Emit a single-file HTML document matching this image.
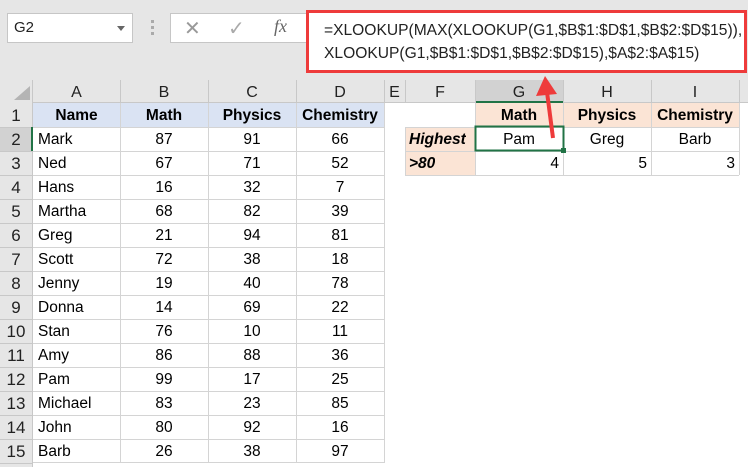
<!DOCTYPE html>
<html><head><style>
*{margin:0;padding:0;box-sizing:border-box}
body{width:748px;height:467px;overflow:hidden;background:#fff;font-family:"Liberation Sans",sans-serif;position:relative;color:#000}
.a{position:absolute}
.c{position:absolute;font-size:15.5px;line-height:25px;height:24px;white-space:nowrap;overflow:hidden}
</style></head><body>
<div class="a" style="left:0;top:0;width:748px;height:80px;background:#e6e6e6"></div>
<div class="a" style="left:7px;top:13px;width:126px;height:30px;background:#fff;border:1px solid #c6c6c6"></div>
<div class="a" style="left:14px;top:19px;font-size:15px;color:#222">G2</div>
<div class="a" style="left:117px;top:26px;border-left:4px solid transparent;border-right:4px solid transparent;border-top:5px solid #666"></div>
<div class="a" style="left:151px;top:20px;width:3px;height:3px;background:#aaa;box-shadow:0 6px #aaa,0 12px #aaa"></div>
<div class="a" style="left:170px;top:13px;width:140px;height:30px;background:#fff;border:1px solid #c6c6c6"></div>
<div class="a" style="left:184px;top:16px;font-size:20px;color:#999">✕</div>
<div class="a" style="left:228px;top:16px;font-size:20px;color:#aaa">✓</div>
<div class="a" style="left:274px;top:16px;font-size:18px;font-style:italic;font-family:'Liberation Serif',serif;color:#666">fx</div>
<div class="a" style="left:306px;top:10px;width:441px;height:63px;background:#fff;border:3px solid #ee3b3b"></div>
<div class="a" style="left:324px;top:19px;font-size:15.6px;line-height:23px;color:#222;white-space:nowrap">=XLOOKUP(MAX(XLOOKUP(G1,$B$1:$D$1,$B$2:$D$15)),<br>XLOOKUP(G1,$B$1:$D$1,$B$2:$D$15),$A$2:$A$15)</div>
<div class="a" style="left:0;top:80px;width:748px;height:23px;background:#e6e6e6;border-bottom:1px solid #c8c8c8"></div>
<div class="a" style="left:0;top:80px;width:33px;height:387px;background:#e6e6e6;border-right:1px solid #c8c8c8"></div>
<div class="a" style="left:14px;top:86px;border-left:16px solid transparent;border-bottom:14px solid #b4b4b4"></div>
<div class="a" style="left:475px;top:80px;width:88px;height:23px;background:#d2d2d2;border-bottom:2px solid #217346"></div>
<div class="a" style="left:0;top:127px;width:33px;height:24px;background:#d2d2d2"></div>
<svg class="a" style="left:0;top:0" width="748" height="467">
<rect x="33" y="103" width="351" height="24" fill="#dae3f3"/>
<rect x="475" y="103" width="264" height="24" fill="#fbe4d5"/>
<rect x="405" y="127" width="70" height="48" fill="#fbe4d5"/>
<g stroke="#d4d4d4">
<line x1="33" y1="127.5" x2="384" y2="127.5"/><line x1="33" y1="151.5" x2="384" y2="151.5"/><line x1="33" y1="175.5" x2="384" y2="175.5"/><line x1="33" y1="199.5" x2="384" y2="199.5"/><line x1="33" y1="223.5" x2="384" y2="223.5"/><line x1="33" y1="247.5" x2="384" y2="247.5"/><line x1="33" y1="271.5" x2="384" y2="271.5"/><line x1="33" y1="295.5" x2="384" y2="295.5"/><line x1="33" y1="319.5" x2="384" y2="319.5"/><line x1="33" y1="343.5" x2="384" y2="343.5"/><line x1="33" y1="367.5" x2="384" y2="367.5"/><line x1="33" y1="391.5" x2="384" y2="391.5"/><line x1="33" y1="415.5" x2="384" y2="415.5"/><line x1="33" y1="439.5" x2="384" y2="439.5"/><line x1="33" y1="462.5" x2="384" y2="462.5"/>
<line x1="405" y1="127.5" x2="739" y2="127.5"/><line x1="405" y1="151.5" x2="739" y2="151.5"/><line x1="405" y1="175.5" x2="739" y2="175.5"/>
<line x1="120.5" y1="103" x2="120.5" y2="463"/><line x1="208.5" y1="103" x2="208.5" y2="463"/><line x1="296.5" y1="103" x2="296.5" y2="463"/><line x1="384.5" y1="103" x2="384.5" y2="463"/>
<line x1="405.5" y1="127" x2="405.5" y2="175"/><line x1="475.5" y1="103" x2="475.5" y2="175"/><line x1="563.5" y1="103" x2="563.5" y2="175"/><line x1="651.5" y1="103" x2="651.5" y2="175"/><line x1="739.5" y1="103" x2="739.5" y2="175"/>
</g>
<g stroke="#c8c8c8"><line x1="0" y1="127.5" x2="33" y2="127.5"/><line x1="0" y1="151.5" x2="33" y2="151.5"/><line x1="0" y1="175.5" x2="33" y2="175.5"/><line x1="0" y1="199.5" x2="33" y2="199.5"/><line x1="0" y1="223.5" x2="33" y2="223.5"/><line x1="0" y1="247.5" x2="33" y2="247.5"/><line x1="0" y1="271.5" x2="33" y2="271.5"/><line x1="0" y1="295.5" x2="33" y2="295.5"/><line x1="0" y1="319.5" x2="33" y2="319.5"/><line x1="0" y1="343.5" x2="33" y2="343.5"/><line x1="0" y1="367.5" x2="33" y2="367.5"/><line x1="0" y1="391.5" x2="33" y2="391.5"/><line x1="0" y1="415.5" x2="33" y2="415.5"/><line x1="0" y1="439.5" x2="33" y2="439.5"/><line x1="0" y1="463.5" x2="33" y2="463.5"/>
<line x1="120.5" y1="80" x2="120.5" y2="103"/><line x1="208.5" y1="80" x2="208.5" y2="103"/><line x1="296.5" y1="80" x2="296.5" y2="103"/><line x1="384.5" y1="80" x2="384.5" y2="103"/><line x1="405.5" y1="80" x2="405.5" y2="103"/><line x1="475.5" y1="80" x2="475.5" y2="103"/><line x1="563.5" y1="80" x2="563.5" y2="103"/><line x1="651.5" y1="80" x2="651.5" y2="103"/><line x1="739.5" y1="80" x2="739.5" y2="103"/></g>
<rect x="475.5" y="126.5" width="88" height="24" fill="none" stroke="#217346" stroke-width="2"/>
<rect x="561" y="148" width="5" height="5" fill="#217346"/>
<line x1="32" y1="127" x2="32" y2="151" stroke="#217346" stroke-width="2"/>
<line x1="553" y1="138" x2="547" y2="92" stroke="#ee3b3b" stroke-width="4"/>
<polygon points="545,76 536,96 557,94" fill="#ee3b3b"/>
</svg>
<div style="font-size:16px;color:#222">
<div class="c" style="left:33px;top:81px;width:87px;text-align:center;line-height:23px;font-size:16px">A</div>
<div class="c" style="left:120px;top:81px;width:88px;text-align:center;line-height:23px;font-size:16px">B</div>
<div class="c" style="left:208px;top:81px;width:88px;text-align:center;line-height:23px;font-size:16px">C</div>
<div class="c" style="left:296px;top:81px;width:88px;text-align:center;line-height:23px;font-size:16px">D</div>
<div class="c" style="left:384px;top:81px;width:21px;text-align:center;line-height:23px;font-size:16px">E</div>
<div class="c" style="left:405px;top:81px;width:70px;text-align:center;line-height:23px;font-size:16px">F</div>
<div class="c" style="left:475px;top:81px;width:88px;text-align:center;line-height:23px;font-size:16px">G</div>
<div class="c" style="left:563px;top:81px;width:88px;text-align:center;line-height:23px;font-size:16px">H</div>
<div class="c" style="left:651px;top:81px;width:88px;text-align:center;line-height:23px;font-size:16px">I</div>
</div>
<div id="rows"></div>
<script>
var d=[["Name","Math","Physics","Chemistry"],["Mark",87,91,66],["Ned",67,71,52],["Hans",16,32,7],["Martha",68,82,39],["Greg",21,94,81],["Scott",72,38,18],["Jenny",19,40,78],["Donna",14,69,22],["Stan",76,10,11],["Amy",86,88,36],["Pam",99,17,25],["Michael",83,23,85],["John",80,92,16],["Barb",26,38,97]];
var h="";
for(var i=0;i<15;i++){var y=103+24*i;
h+='<div class="c" style="left:0;top:'+y+'px;width:32px;text-align:center;font-size:17px;color:#222">'+(i+1)+'</div>';
var b=i==0?'font-weight:bold;':'';
h+='<div class="c" style="left:'+(i==0?33:38)+'px;top:'+y+'px;width:'+(i==0?87:80)+'px;'+(i==0?'text-align:center;':'')+b+'">'+d[i][0]+'</div>';
var xs=[120,208,296];for(var j=1;j<4;j++)h+='<div class="c" style="left:'+xs[j-1]+'px;top:'+y+'px;width:88px;text-align:center;'+b+'">'+d[i][j]+'</div>';}
var r=[[103,"",0,"Math","Physics","Chemistry","b"],[127,"Highest",1,"Pam","Greg","Barb","c"],[151,"&gt;80",1,"4","5","3","r"]];
r.forEach(function(q){h+='<div class="c" style="left:409px;top:'+q[0]+'px;font-weight:bold;font-style:italic">'+q[1]+'</div>';
var xs=[475,563,651];for(var j=0;j<3;j++){var st=q[6]=="b"?"text-align:center;font-weight:bold;":q[6]=="c"?"text-align:center;":"text-align:right;padding-right:4px;";
h+='<div class="c" style="left:'+xs[j]+'px;top:'+q[0]+'px;width:88px;'+st+'">'+q[3+j]+'</div>';}});
document.getElementById("rows").innerHTML=h;
</script>
</body></html>
